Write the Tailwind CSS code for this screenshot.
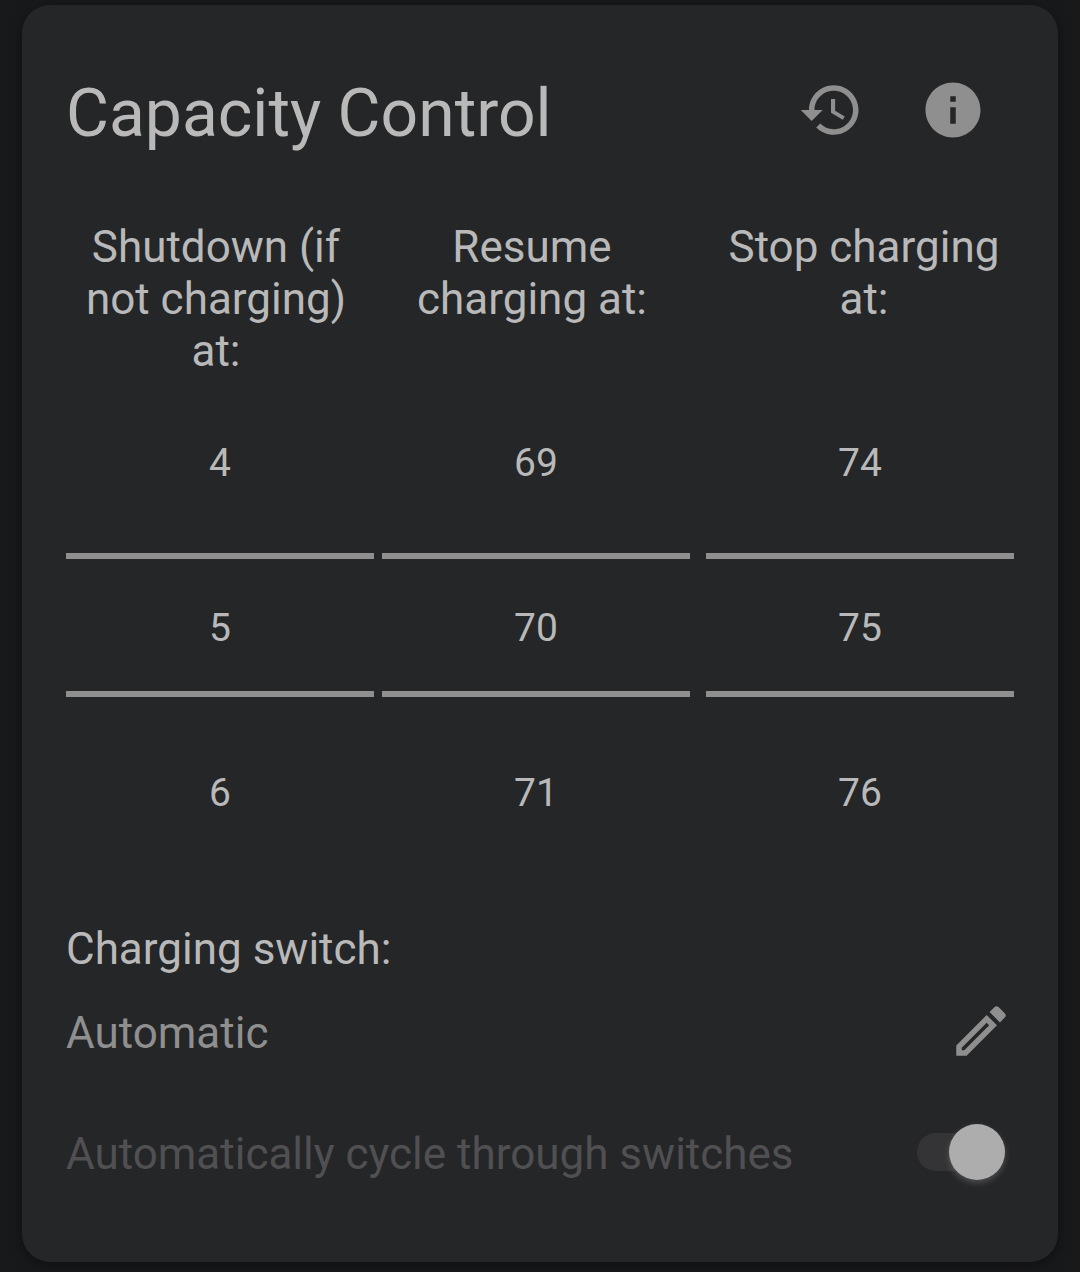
<!DOCTYPE html>
<html lang="en">
<head>
<meta charset="utf-8">
<meta name="viewport" content="width=device-width, initial-scale=1">
<title>Capacity Control</title>
<script src="https://cdn.jsdelivr.net/npm/@tailwindcss/browser@4"></script>
</head>
<body class="bg-[#18191b] px-[22px] pt-[5px] pb-[10px] font-['Roboto',sans-serif] text-[#b9b9b9]">
<main class="rounded-[28px] bg-[#252628] px-11 pt-[72px] pb-[77px] shadow-[0_3px_14px_rgba(0,0,0,0.4)]">
  <header class="flex h-[72px] items-start justify-between">
    <h1 class="text-[66px] leading-[74px]">Capacity Control</h1>
    <div class="flex gap-14 pr-7 text-[#8f8f8f]">
      <button type="button" aria-label="History" class="size-[66px]">
        <svg viewBox="0 0 24 24" class="size-full" fill="currentColor"><path d="M13 3c-4.97 0-9 4.03-9 9H1l3.89 3.89.07.14L9 12H6c0-3.87 3.13-7 7-7s7 3.13 7 7-3.13 7-7 7c-1.93 0-3.68-.79-4.94-2.06l-1.42 1.42C8.27 19.99 10.51 21 13 21c4.97 0 9-4.03 9-9s-4.03-9-9-9zm-1 5v5l4.28 2.54.72-1.21-3.5-2.08V8H12z"/></svg>
      </button>
      <button type="button" aria-label="Information" class="size-[66px]">
        <svg viewBox="0 0 24 24" class="size-full" fill="currentColor"><path d="M12 2C6.48 2 2 6.48 2 12s4.48 10 10 10 10-4.48 10-10S17.52 2 12 2zm1 15h-2v-6h2v6zm0-8h-2V7h2v2z"/></svg>
      </button>
    </div>
  </header>

  <section class="mt-[72px] grid grid-cols-3 text-center">
    <label for="shutdown" class="h-[156px] pr-4 text-[44px] leading-[52px]">Shutdown (if not charging) at:</label>
    <label for="resume" class="h-[156px] pr-4 text-[44px] leading-[52px]">Resume charging at:</label>
    <label for="stop" class="h-[156px] pl-4 text-[44px] leading-[52px]">Stop charging at:</label>

    <div class="mr-2 flex flex-col text-[39px]">
      <button type="button" class="h-[176px] pb-1">4</button>
      <input id="shutdown" type="text" inputmode="numeric" value="5" class="h-36 w-full border-y-[6px] border-[#8f8f8f] pt-[6px] text-center outline-none">
      <button type="button" class="h-48">6</button>
    </div>
    <div class="mr-2 flex flex-col text-[39px]">
      <button type="button" class="h-[176px] pb-1">69</button>
      <input id="resume" type="text" inputmode="numeric" value="70" class="h-36 w-full border-y-[6px] border-[#8f8f8f] pt-[6px] text-center outline-none">
      <button type="button" class="h-48">71</button>
    </div>
    <div class="ml-2 flex flex-col text-[39px]">
      <button type="button" class="h-[176px] pb-1">74</button>
      <input id="stop" type="text" inputmode="numeric" value="75" class="h-36 w-full border-y-[6px] border-[#8f8f8f] pt-[6px] text-center outline-none">
      <button type="button" class="h-48">76</button>
    </div>
  </section>

  <section class="mt-[34px] text-[44px] leading-[52px]">
    <h2>Charging switch:</h2>
    <div class="mt-[23px] flex h-[66px] items-center justify-between text-[#8f8f8f]">
      <p class="pt-1">Automatic</p>
      <button type="button" aria-label="Edit charging switch" class="size-[66px]">
        <svg viewBox="0 0 24 24" class="size-full" fill="currentColor"><path d="M14.06 9.02l.92.92L5.92 19H5v-.92l9.06-9.06M17.66 3c-.25 0-.51.1-.7.29l-1.83 1.83 3.75 3.75 1.83-1.83c.39-.39.39-1.02 0-1.41l-2.34-2.34c-.2-.2-.45-.29-.71-.29zm-3.6 3.19L3 17.25V21h3.75L17.81 9.94l-3.75-3.75z"/></svg>
      </button>
    </div>
    <div class="mt-[55px] flex h-[66px] items-center justify-between pr-[9px]">
      <label for="cycle" class="pt-1 text-[#505052]">Automatically cycle through switches</label>
      <input id="cycle" type="checkbox" role="switch" checked disabled class="flex h-[38px] w-[88px] shrink-0 appearance-none items-center justify-end rounded-full bg-[#343436] before:size-14 before:shrink-0 before:rounded-full before:bg-[#adadad] before:shadow-[0_3px_6px_rgba(173,173,173,0.3)] before:content-['']">
    </div>
  </section>
</main>
</body>
</html>
